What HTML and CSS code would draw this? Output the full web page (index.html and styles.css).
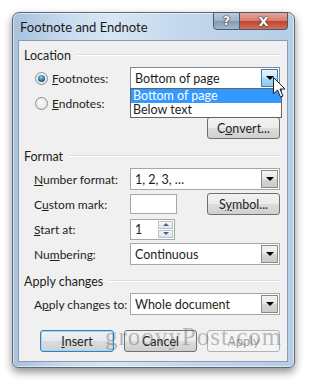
FILE: index.html
```html
<!DOCTYPE html>
<html lang="en">
<head>
  <meta charset="UTF-8">
  <title>Footnote and Endnote</title>
  <link rel="stylesheet" href="styles.css">
</head>
<body>
  <div class="window">
    <div class="titlebar">
      <span class="title">Footnote and Endnote</span>
      <div class="caption-buttons">
        <span class="cap-btn help">?</span>
        <span class="cap-btn close">X</span>
      </div>
    </div>

    <div class="client">
      <!-- Location -->
      <div class="group-title"><span>Location</span><i></i></div>
      <div class="rows">
        <div class="row">
          <label class="label radio-label"><span class="radio checked"></span><span><u>F</u>ootnotes:</span></label>
          <div class="combo open">
            <span class="combo-text">Bottom of page</span>
            <span class="combo-btn hot"></span>
            <ul class="dropdown">
              <li class="selected">Bottom of page</li>
              <li>Below text</li>
            </ul>
            <svg class="cursor" width="13" height="21" viewBox="0 0 13 21">
              <path d="M0.5 0.5 L0.5 17 L4.5 13 L7.5 20 L10 19 L7 12 L12 12 Z" fill="#fff" stroke="#222" stroke-width="1" stroke-linejoin="round"/>
            </svg>
          </div>
        </div>
        <div class="row">
          <label class="label radio-label"><span class="radio"></span><span><u>E</u>ndnotes:</span></label>
        </div>
        <div class="row right">
          <button class="btn">C<u>o</u>nvert...</button>
        </div>
      </div>

      <!-- Format -->
      <div class="group-title spaced"><span>Format</span><i></i></div>
      <div class="rows">
        <div class="row">
          <label class="label"><u>N</u>umber format:</label>
          <div class="combo">
            <span class="combo-text">1, 2, 3, …</span>
            <span class="combo-btn"></span>
          </div>
        </div>
        <div class="row">
          <label class="label">C<u>u</u>stom mark:</label>
          <div class="textbox"></div>
          <button class="btn push-right">S<u>y</u>mbol...</button>
        </div>
        <div class="row">
          <label class="label"><u>S</u>tart at:</label>
          <div class="spin">
            <span class="spin-text">1</span>
            <div class="spin-btns">
              <span class="spin-up"></span>
              <span class="spin-down"></span>
            </div>
          </div>
        </div>
        <div class="row">
          <label class="label">Nu<u>m</u>bering:</label>
          <div class="combo">
            <span class="combo-text">Continuous</span>
            <span class="combo-btn"></span>
          </div>
        </div>
      </div>

      <!-- Apply changes -->
      <div class="group-title spaced-sm"><span>Apply changes</span><i></i></div>
      <div class="rows apply-rows">
        <div class="row">
          <label class="label">A<u>p</u>ply changes to:</label>
          <div class="combo">
            <span class="combo-text">Whole document</span>
            <span class="combo-btn"></span>
          </div>
        </div>
      </div>

      <div class="actions">
        <button class="btn default"><u>I</u>nsert</button>
        <button class="btn">Cancel</button>
        <button class="btn disabled">Apply</button>
      </div>

      <span class="watermark">groovyPost.com</span>
    </div>
  </div>
</body>
</html>
```

FILE: styles.css
```css
/* dialog */
body {
  margin: 0;
  padding: 12px;
  background-color: #fff;
  font-family: 'Lato', 'Noto Sans', sans-serif;
  font-size: 12px;
  color: #1e1e1e;
}
u {
  text-decoration: underline;
  text-underline-offset: 1px;
}
.window {
  width: 283px;
  height: 356px;
  box-sizing: border-box;
  border: 1px solid #5d6876;
  border-radius: 7px 7px 6px 6px;
  padding: 0 6px 5px 5px;
  background: linear-gradient(to right, #a7c1de 0%, #c9dcef 20%, #d8e6f4 35%, #c3d7ec 60%, #b6cde7 100%);
  box-shadow: 0 4px 9px rgba(0, 0, 0, 0.45), inset 0 0 0 1px rgba(255, 255, 255, 0.55);
  display: flex;
  flex-direction: column;
}
.titlebar {
  height: 27px;
  display: flex;
  align-items: flex-start;
  justify-content: space-between;
  padding-left: 2px;
}
.title {
  margin-top: 6px;
  font-size: 13px;
  color: #1a1a1a;
}
.caption-buttons {
  display: flex;
  margin-top: -1px;
}
.cap-btn {
  height: 18px;
  box-sizing: border-box;
  border: 1px solid #4b5a6d;
  display: flex;
  align-items: center;
  justify-content: center;
  color: #fff;
  font-family: 'DejaVu Sans', sans-serif;
  font-weight: bold;
  font-size: 12px;
  text-shadow: 0 0 2px #333, 0 0 1px #000;
}
.help {
  width: 27px;
  border-radius: 0 0 0 4px;
  background: linear-gradient(#bccbdc, #9fb2c8 50%, #8199b4 51%, #a3b8cf);
}
.close {
  width: 48px;
  border-left: none;
  border-radius: 0 0 4px 0;
  background: linear-gradient(#e5a79c, #d67a6b 50%, #c2432f 51%, #d2705a);
  font-size: 13px;
}
.client {
  position: relative;
  flex: 1;
  background-color: #f0f0f0;
  border: 1px solid #8a9db3;
  padding: 6px 7px 0 5px;
  overflow: hidden;
}
.group-title {
  height: 16px;
  display: flex;
  align-items: center;
  gap: 6px;
  margin-bottom: 4px;
  font-size: 12.5px;
}
.group-title i {
  flex: 1;
  height: 1px;
  background-color: #d5dfe5;
  border-bottom: 1px solid #fff;
}
.group-title.spaced {
  margin-top: 9px;
}
.group-title.spaced-sm {
  margin-top: 8px;
}
.apply-rows {
  margin-top: 2px;
}
.rows {
  display: flex;
  flex-direction: column;
  gap: 3px;
  padding-left: 10px;
}
.row {
  height: 22px;
  display: flex;
  align-items: center;
}
.row.right {
  justify-content: flex-end;
}
.label {
  width: 96px;
  flex-shrink: 0;
  white-space: nowrap;
}
.radio-label {
  display: flex;
  align-items: center;
  gap: 4px;
  margin-left: 1px;
  width: 95px;
}
.radio {
  width: 13px;
  height: 13px;
  box-sizing: border-box;
  border-radius: 50%;
  border: 1px solid #8f8f8f;
  background: radial-gradient(circle at 50% 40%, #fbfbfb, #dcdcdc);
  display: flex;
  align-items: center;
  justify-content: center;
}
.radio.checked::after {
  content: '';
  width: 7px;
  height: 7px;
  border-radius: 50%;
  background: radial-gradient(circle at 45% 35%, #8ad3ef, #1e6a8f 60%, #0e3e5a);
}
.combo {
  position: relative;
  width: 150px;
  height: 22px;
  box-sizing: border-box;
  border: 1px solid #a6a6a6;
  background-color: #fff;
  display: flex;
  align-items: center;
  justify-content: space-between;
}
.combo.open {
  width: 152px;
  border-color: #7f8b96;
}
.combo-text {
  padding-left: 4px;
  font-size: 12.5px;
}
.combo-btn {
  width: 17px;
  height: 18px;
  margin-right: 1px;
  box-sizing: border-box;
  border: 1px solid #8a8a8a;
  background: linear-gradient(#f4f4f4, #e6e6e6 50%, #d6d6d6 51%, #cbcbcb);
  display: flex;
  align-items: center;
  justify-content: center;
}
.combo-btn::after {
  content: '';
  border-left: 4px solid transparent;
  border-right: 4px solid transparent;
  border-top: 4px solid #000;
}
.combo-btn.hot {
  border-color: #3c7fb1;
  background: linear-gradient(#e3f4fc, #c4e6f8 50%, #a8d8f3 51%, #8ccaec);
}
.dropdown {
  position: absolute;
  left: -1px;
  top: 20px;
  width: 152px;
  box-sizing: border-box;
  margin: 0;
  padding: 0;
  list-style: none;
  border: 1px solid #646464;
  background-color: #fff;
  z-index: 2;
}
.dropdown li {
  height: 14px;
  line-height: 14px;
  padding-left: 2px;
  font-size: 12.5px;
}
.dropdown li.selected {
  background-color: #3399ff;
  color: #fff;
}
.cursor {
  position: absolute;
  left: 142px;
  top: 9px;
  z-index: 3;
}
.textbox {
  width: 47px;
  height: 20px;
  box-sizing: border-box;
  border: 1px solid #a6a6a6;
  background-color: #fff;
}
.push-right {
  margin-left: auto;
}
.spin {
  width: 45px;
  height: 21px;
  box-sizing: border-box;
  border: 1px solid #a6a6a6;
  background-color: #fff;
  display: flex;
  align-items: center;
  justify-content: space-between;
}
.spin-text {
  padding-left: 4px;
  font-size: 12.5px;
}
.spin-btns {
  width: 15px;
  height: 17px;
  margin-right: 1px;
  display: flex;
  flex-direction: column;
  gap: 1px;
}
.spin-btns span {
  flex: 1;
  box-sizing: border-box;
  border: 1px solid #b6c2cf;
  background: linear-gradient(#f7f9fb, #dde4ec);
  display: flex;
  align-items: center;
  justify-content: center;
}
.spin-up::after {
  content: '';
  border-left: 3px solid transparent;
  border-right: 3px solid transparent;
  border-bottom: 3px solid #4c607a;
}
.spin-down::after {
  content: '';
  border-left: 3px solid transparent;
  border-right: 3px solid transparent;
  border-top: 3px solid #4c607a;
}
.btn {
  width: 73px;
  height: 22px;
  box-sizing: border-box;
  border: 1px solid #707070;
  border-radius: 3px;
  background: linear-gradient(#f2f2f2, #ebebeb 50%, #dddddd 51%, #cfcfcf);
  font-family: inherit;
  font-size: 12.5px;
  color: #1e1e1e;
  padding: 0;
}
.actions {
  display: flex;
  justify-content: flex-end;
  gap: 10px;
  margin-top: 15px;
}
.btn.default {
  width: 74px;
  border-color: #3c7fb1;
  box-shadow: inset 0 0 0 1px #9fd6f5;
  background: linear-gradient(#eef1f3, #e7eaec 50%, #d9dcde 51%, #cfd3d6);
}
.btn.disabled {
  border-color: #adb2b5;
  background: #f4f4f4;
  color: #a0a0a0;
}
.watermark {
  position: absolute;
  left: 86px;
  top: 283px;
  font-family: 'Liberation Serif', serif;
  font-size: 25px;
  line-height: 1;
  letter-spacing: 1px;
  color: rgba(110, 110, 110, 0.45);
  pointer-events: none;
}
```
